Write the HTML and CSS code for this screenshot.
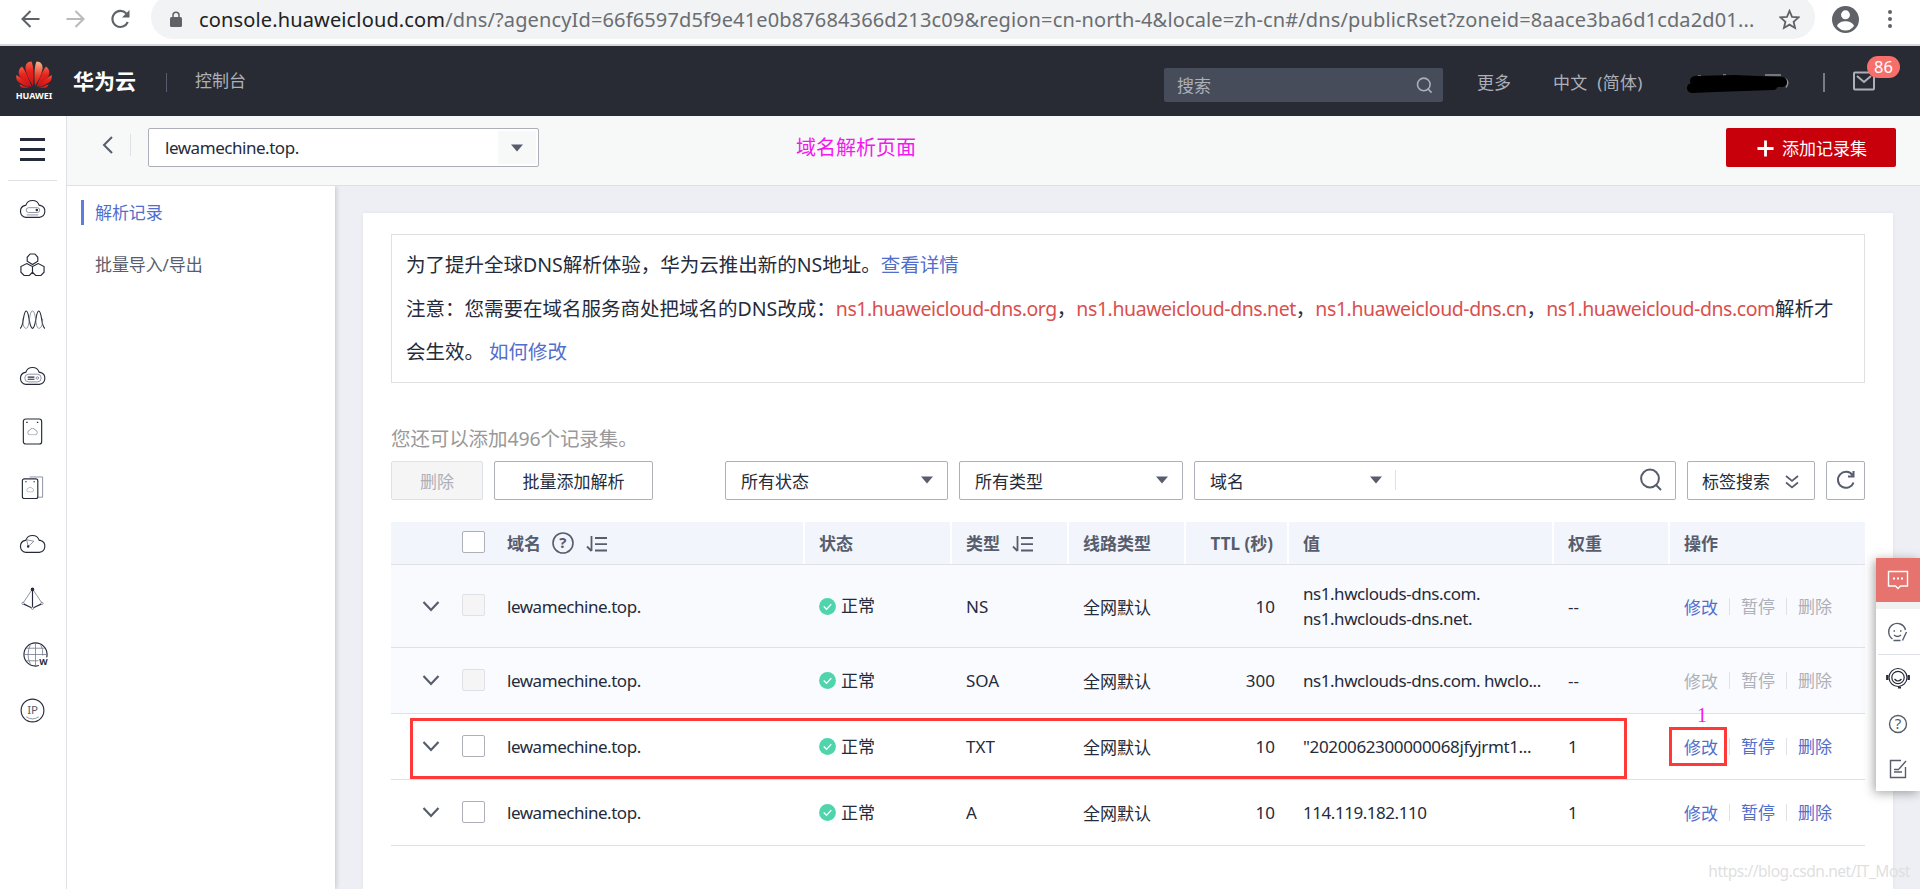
FILE: index.html
```
<!DOCTYPE html>
<html lang="zh-CN">
<head>
    <meta charset="UTF-8">
    <meta name="viewport" content="width=device-width, initial-scale=1.0">
    <title>云解析服务 - 控制台</title>
    <link rel="stylesheet" href="styles.css">
</head>
<body>

    <!-- shared icons -->
    <svg class="defs">
        <symbol id="down" viewBox="0 0 18 12"><path d="M1.5 2 L9 10 L16.5 2" fill="none" stroke="#575d6c" stroke-width="2.2"/></symbol>
        <symbol id="arrow" viewBox="0 0 12 8"><path d="M0 .5H12L6 7.5Z" fill="#575d6c"/></symbol>
        <symbol id="ok" viewBox="0 0 18 18"><circle cx="9" cy="9" r="8.9" fill="#50d4ab"/><path d="M5 9l3 3 5-5.5" fill="none" stroke="#fff" stroke-width="1.4"/></symbol>
        <symbol id="sort" viewBox="0 0 22 18"><path d="M5.5 1V16M1 11.5L5.5 16M9 3H21M9 9.2H21M9 15.5H21" fill="none" stroke="#575d6c" stroke-width="1.8"/></symbol>
        <symbol id="cloud" viewBox="0 0 28 20"><path d="M7 19H21A6.3 6.3 0 0 0 22 6.6H21A7.4 7.4 0 0 0 7 6.6H6.5A6.3 6.3 0 0 0 7 19Z"/></symbol>
        <symbol id="search" viewBox="0 0 24 24"><circle cx="11" cy="10.5" r="8.9"/><path d="M17 17l5 5"/></symbol>
    </svg>

    <div class="browser">
        <svg class="nav-icon" viewBox="0 0 20 20"><path d="M19 10H2M10 2L2 10l8 8" stroke="#5f6368"/></svg>
        <svg class="nav-icon forward" viewBox="0 0 20 20"><path d="M1 10H18M10 2l8 8-8 8" stroke="#bababa"/></svg>
        <svg class="nav-icon reload" viewBox="0 0 20 20"><path d="M17.3 13A8 8 0 1 1 15.8 4.5" stroke="#5f6368"/><path d="M19 1V8.5H11.5Z" fill="#5f6368"/></svg>
        <div class="omnibox">
            <svg class="lock" viewBox="0 0 12 16"><path d="M3 7V4.2a3 3 0 0 1 6 0V7" fill="none" stroke="#5f6368" stroke-width="1.5"/><rect y="6" width="12" height="10" rx="1.5" fill="#5f6368"/></svg>
            <div class="url"><b>console.huaweicloud.com</b>/dns/?agencyId=66f6597d5f9e41e0b87684366d213c09&amp;region=cn-north-4&amp;locale=zh-cn#/dns/publicRset?zoneid=8aace3ba6d1cda2d01...</div>
            <svg class="star" viewBox="0 0 20 20"><path d="M10 1.8l2.4 5.7 6.2.5-4.7 4.1 1.4 6L10 14.9l-5.3 3.2 1.4-6L1.4 8l6.2-.5Z"/></svg>
        </div>
        <svg class="user" viewBox="0 0 26 26"><circle cx="13" cy="13" r="13" fill="#5f6368"/><circle cx="13" cy="8.5" r="4.3" fill="#fff"/><path d="M4.8 19.3C6 16 10 14.8 13 14.8s7 1.2 8.2 4.5A10 10 0 0 1 4.8 19.3Z" fill="#fff"/></svg>
        <svg class="dots" viewBox="0 0 6 20"><circle cx="3" cy="3" r="2"/><circle cx="3" cy="10" r="2"/><circle cx="3" cy="17" r="2"/></svg>
    </div>

    <div class="topbar">
        <div class="logo">
            <svg viewBox="0 0 36 27">
                <defs>
                    <linearGradient id="petal" x1="0" y1="0" x2="0" y2="1"><stop offset="0" stop-color="#f4634e"/><stop offset=".4" stop-color="#e8231c"/><stop offset="1" stop-color="#c81418"/></linearGradient>
                    <linearGradient id="shine" x1="0" y1="0" x2="0" y2="1"><stop offset="0" stop-color="#fbb48c"/><stop offset=".6" stop-color="#ee3a28"/><stop offset="1" stop-color="#d81a18"/></linearGradient>
                </defs>
                <g fill="url(#petal)">
                    <path d="M17 25C17.7 17 18 6 15.5 .5C11 .5 9 4 9.5 8C10.500 14 14 20 17 25Z"/>
                    <path d="M19 25C18.300 17 18 6 20.500 .5C25 .5 27 4 26.500 8C25.500 14 22 20 19 25Z" fill="url(#shine)"/>
                    <path d="M15.500 26C13 18 9 9 6 5.500C2.500 8 2 11.500 3.500 15C6 20 11 24 15.500 26Z"/>
                    <path d="M20.500 26C23 18 27 9 30 5.500C33.500 8 34 11.500 32.500 15C30 20 25 24 20.500 26Z"/>
                    <path d="M14 26.500C9 21 4 16 .5 14C-.3 18 1 20.500 4 22C7 24 11 25.500 14 26.500Z"/>
                    <path d="M22 26.500C27 21 32 16 35.500 14C36.300 18 35 20.500 32 22C29 24 25 25.500 22 26.500Z"/>
                    <path d="M13 27H6.500C5 26.500 4 25 3.500 23.500Z"/>
                    <path d="M23 27H29.500C31 26.500 32 25 32.500 23.500Z"/>
                </g>
            </svg>
            <span>HUAWEI</span>
        </div>
        <div class="brand">华为云</div>
        <i class="bar"></i>
        <div class="console">控制台</div>
        <div class="top-search">搜索<svg><use href="#search"/></svg></div>
        <div class="more">更多</div>
        <div class="lang">中文 (简体)</div>
        <svg class="account" viewBox="0 0 106 20"><path d="M13 2h3M38 1h3M80 1h16M100 4.5q5 3 1 9" fill="none" stroke="#8d9098" stroke-width="1.5"/><path d="M10 7L50 6 97 8M7 14L30 13 88 11" fill="none" stroke="#000" stroke-width="10" stroke-linecap="round"/></svg>
        <i class="bar light"></i>
        <div class="mail">
            <svg viewBox="0 0 22 20"><rect x="1" y="1.5" width="20" height="17" rx="1"/><path d="M4 5l7 6 7-6"/></svg>
            <span class="badge">86</span>
        </div>
    </div>

    <div class="layout">
        <div class="rail">
            <div class="burger"><i></i><i></i><i></i></div>
            <div class="rail-item"><svg viewBox="0 0 28 20"><use href="#cloud"/><rect x="7.5" y="9" width="14" height="5" rx="2.5" class="thin"/><circle cx="18.5" cy="11.5" r=".7"/><path d="M8 16.5H20" class="thin"/></svg></div>
            <div class="rail-item"><svg viewBox="0 0 28 24"><path d="M11.500 1h5l3 3.500v4l-5.500 3.500-5.500-3.500v-4ZM8 11l6 3v6l-3.500 3.500H5.500L2 20v-6ZM20 11l-6 3v6l3.500 3.500h5L26 20v-6Z"/></svg></div>
            <div class="rail-item"><svg viewBox="0 0 28 20"><path d="M1 19C5 19 4 1 7.5 1S10 19 14 19 17 1 20.5 1 23 19 27 19"/><path d="M4 9C4 16 5 19 7.5 19 11.5 19 10 1 14 1S16.5 19 20.5 19C23 19 24.5 16 24.5 9" class="thin"/></svg></div>
            <div class="rail-item"><svg viewBox="0 0 28 20"><use href="#cloud"/><rect x="6" y="8.5" width="17" height="8" rx="4" class="thin"/><path d="M9 11.5h7M9 13.7h7"/><circle cx="19" cy="12.5" r="1.3" class="thin"/></svg></div>
            <div class="rail-item"><svg viewBox="0 0 28 28"><rect x="4.500" y="1" width="19" height="26" rx="2.5"/><path d="M7.5 4.5h1.5M18.5 4.5h1.5"/><use href="#cloud" x="8.5" y="10" width="11" height="8" class="fine"/></svg></div>
            <div class="rail-item"><svg viewBox="0 0 28 24"><path d="M11 1H24.5V22H19" class="thin"/><rect x="3.500" y="3" width="16" height="20.5" rx="2"/><path d="M6.5 6H8M15 6h1.5"/><use href="#cloud" x="7.5" y="11" width="8" height="6" class="fine"/></svg></div>
            <div class="rail-item"><svg viewBox="0 0 28 20"><use href="#cloud"/><path d="M8 6l7.5 1.5L9.5 13Z" class="thin"/><circle cx="9.5" cy="13" r=".7"/></svg></div>
            <div class="rail-item"><svg viewBox="0 0 28 24"><path d="M14 2L4 17M14 2L24 17" class="thin"/><path d="M14 2V22M4.5 17.5L14 22l9.5-4.5"/><circle cx="14" cy="2.5" r="1.3" fill="#252b3a"/><circle cx="4.2" cy="17" r="1.2" fill="#fff" class="thin"/><circle cx="23.8" cy="17" r="1.2" fill="#fff" class="thin"/><circle cx="14" cy="22" r="1.2" fill="#fff" class="thin"/></svg></div>
            <div class="rail-item web"><svg viewBox="0 0 28 28"><circle cx="14" cy="14" r="12"/><path class="thin" d="M14 2V26M2 14H26M4.5 7.5H23.5M4.5 20.5H17M9 3Q3.5 14 9 25M19 3Q22 8 21.5 15"/><rect x="17.5" y="17" width="10" height="9" fill="#fff" stroke="none"/><text x="18" y="24.5">W</text></svg></div>
            <div class="rail-item"><svg viewBox="0 0 28 28"><circle cx="14" cy="14" r="11.8"/><path d="M7.500 20.500Q14 25 20.500 20.500" class="thin"/><text x="8.500" y="18" class="ip">IP</text></svg></div>
        </div>

        <div class="page">
            <div class="subbar">
                <svg class="back" viewBox="0 0 11 18"><path d="M10 1L2 9l8 8"/></svg>
                <i class="back-line"></i>
                <div class="zone latin">lewamechine.top.<span><svg><use href="#arrow"/></svg></span></div>
                <div class="note">域名解析页面</div>
                <div class="add"><svg viewBox="0 0 18 18"><path d="M9 .5V17.5M.5 9H17.5"/></svg>添加记录集</div>
            </div>

            <div class="content">
                <div class="menu">
                    <div class="menu-item active">解析记录</div>
                    <div class="menu-item">批量导入/导出</div>
                </div>

                <div class="card">
                    <div class="tips">
                        <p>为了提升全球DNS解析体验，华为云推出新的NS地址。<a>查看详情</a></p>
                        <p>注意：您需要在域名服务商处把域名的DNS改成：<em>ns1.huaweicloud-dns.org</em>，<em>ns1.huaweicloud-dns.net</em>，<em>ns1.huaweicloud-dns.cn</em>，<em>ns1.huaweicloud-dns.com</em>解析才</p>
                        <p>会生效。 <a>如何修改</a></p>
                    </div>

                    <div class="quota">您还可以添加496个记录集。</div>

                    <div class="tools">
                        <div class="btn disabled">删除</div>
                        <div class="btn batch">批量添加解析</div>
                        <div class="select state">所有状态<svg><use href="#arrow"/></svg></div>
                        <div class="select type">所有类型<svg><use href="#arrow"/></svg></div>
                        <div class="finder">
                            <div class="field">域名<svg><use href="#arrow"/></svg></div>
                            <svg class="mag"><use href="#search"/></svg>
                        </div>
                        <div class="btn tag">标签搜索<svg viewBox="0 0 16 14"><path d="M2 1l6 5 6-5M2 7.5l6 5 6-5"/></svg></div>
                        <div class="btn refresh"><svg viewBox="0 0 20 20"><path d="M17.5 12.5A8 8 0 1 1 16.5 5.2M17.5 1v5.5H12"/></svg></div>
                    </div>

                    <div class="table">
                        <div class="row head">
                            <div></div>
                            <div class="check"><i class="box"></i></div>
                            <div class="line">域名<svg class="help" viewBox="0 0 22 22"><circle cx="11" cy="11" r="10"/><text x="7.3" y="16.2">?</text></svg><svg class="sort"><use href="#sort"/></svg></div>
                            <div class="line">状态</div>
                            <div class="line">类型<svg class="sort"><use href="#sort"/></svg></div>
                            <div class="line">线路类型</div>
                            <div class="line ttl">TTL (秒)</div>
                            <div class="line">值</div>
                            <div class="line">权重</div>
                            <div>操作</div>
                        </div>
                        <div class="row tall">
                            <div class="fold"><svg><use href="#down"/></svg></div>
                            <div class="check"><i class="box off"></i></div>
                            <div class="latin">lewamechine.top.</div>
                            <div class="status"><svg><use href="#ok"/></svg>正常</div>
                            <div>NS</div>
                            <div>全网默认</div>
                            <div class="ttl">10</div>
                            <div class="latin value">ns1.hwclouds-dns.com.<br>ns1.hwclouds-dns.net.</div>
                            <div>--</div>
                            <div class="ops"><a>修改</a><a class="off">暂停</a><a class="off">删除</a></div>
                        </div>
                        <div class="row soa">
                            <div class="fold"><svg><use href="#down"/></svg></div>
                            <div class="check"><i class="box off"></i></div>
                            <div class="latin">lewamechine.top.</div>
                            <div class="status"><svg><use href="#ok"/></svg>正常</div>
                            <div>SOA</div>
                            <div>全网默认</div>
                            <div class="ttl">300</div>
                            <div class="latin">ns1.hwclouds-dns.com. hwclo...</div>
                            <div>--</div>
                            <div class="ops"><a class="off">修改</a><a class="off">暂停</a><a class="off">删除</a></div>
                        </div>
                        <div class="row">
                            <div class="fold"><svg><use href="#down"/></svg></div>
                            <div class="check"><i class="box"></i></div>
                            <div class="latin">lewamechine.top.</div>
                            <div class="status"><svg><use href="#ok"/></svg>正常</div>
                            <div>TXT</div>
                            <div>全网默认</div>
                            <div class="ttl">10</div>
                            <div class="latin digits">"2020062300000068jfyjrmt1...</div>
                            <div>1</div>
                            <div class="ops"><a>修改</a><a>暂停</a><a>删除</a></div>
                            <span class="mark mark-row"></span>
                            <span class="mark mark-edit"></span>
                            <span class="step">1</span>
                        </div>
                        <div class="row">
                            <div class="fold"><svg><use href="#down"/></svg></div>
                            <div class="check"><i class="box"></i></div>
                            <div class="latin">lewamechine.top.</div>
                            <div class="status"><svg><use href="#ok"/></svg>正常</div>
                            <div>A</div>
                            <div>全网默认</div>
                            <div class="ttl">10</div>
                            <div class="latin">114.119.182.110</div>
                            <div>1</div>
                            <div class="ops"><a>修改</a><a>暂停</a><a>删除</a></div>
                        </div>
                    </div>
                </div>
            </div>
        </div>
    </div>

    <div class="float">
        <div class="float-chat"><svg viewBox="0 0 22 20"><path d="M1.5 1.5H20.5V16H13.5L11 18.5 8.5 16H1.5Z"/><path d="M6 8.5h2M10 8.5h2M14 8.5h2" stroke-width="2"/></svg></div>
        <div class="float-item smile"><svg viewBox="0 0 20 20"><path d="M4.500 17A8.500 8.500 0 1 1 17.500 8M18.500 10L14.5 18.500M5.500 18.500h7"/><path d="M6 13q3.500 3 7 0M5.500 9H7M12 9h1.5"/></svg></div>
        <div class="float-item agent"><svg viewBox="0 0 24 22"><circle cx="12" cy="10.5" r="9"/><circle cx="12" cy="10.5" r="6.2"/><path d="M8.5 12Q12 16 15.5 12"/><path d="M1.3 8v5M22.7 8v5" stroke-width="2.4"/><path d="M12 20.5h3" stroke-width="2"/></svg></div>
        <div class="float-item"><svg viewBox="0 0 20 20"><circle cx="10" cy="10" r="8.5"/><text x="6.7" y="15">?</text></svg></div>
        <div class="float-item last"><svg viewBox="0 0 20 20"><path d="M13 1.5H2.5V18.5H17.5V8M18 2L11 10M6 10.500h5M6 13h8"/></svg></div>
    </div>

    <div class="watermark">https://blog.csdn.net/IT_Most</div>

</body>
</html>
```
FILE: styles.css
```
* {
    box-sizing: border-box;
}

body {
    margin: 0;
    height: 889px;
    overflow: hidden;
    position: relative;
    font-family: "Noto Sans", "Noto Sans CJK SC", sans-serif;
    font-size: 17px;
    color: #252b3a;
    background: #fff;
}

svg {
    display: block;
    flex: none;
}

.defs {
    position: absolute;
    width: 0;
    height: 0;
}

/* Browser bar */
.browser {
    display: flex;
    align-items: center;
    height: 46px;
    padding: 0 0 6px 20px;
    border-bottom: 2px solid #d5d7da;
}

.nav-icon {
    width: 21px;
    height: 20px;
    fill: none;
    stroke-width: 2.1;
}

.forward {
    margin-left: 24px;
}

.reload {
    margin-left: 24px;
}

.omnibox {
    display: flex;
    align-items: center;
    width: 1664px;
    height: 44px;
    margin: -4px 0 0 20px;
    padding: 4px 15px 0 19px;
    border-radius: 22px;
    background: #f1f3f4;
}

.lock {
    width: 12px;
    height: 16px;
}

.url {
    flex: 1;
    margin-left: 17px;
    font-size: 20px;
    letter-spacing: .14px;
    white-space: nowrap;
    color: #6a6d71;
}

.url b {
    font-weight: normal;
    color: #202124;
}

.star {
    width: 21px;
    height: 21px;
    fill: none;
    stroke: #5f6368;
    stroke-width: 1.7;
}

.user {
    width: 27px;
    height: 27px;
    margin-left: 17px;
}

.dots {
    width: 6px;
    height: 20px;
    margin-left: 28px;
    fill: #5f6368;
}

/* Console header */
.topbar {
    display: flex;
    align-items: center;
    height: 70px;
    padding-left: 16px;
    background: #282b33;
    color: #adb0b8;
}

.logo {
    width: 36px;
    margin-top: -2px;
    text-align: center;
}

.logo svg {
    width: 36px;
    height: 27px;
}

.logo span {
    display: block;
    margin: 3px -4px 0;
    font: bold 9px/9px "Noto Sans", sans-serif;
    color: #fff;
}

.brand {
    width: 93px;
    margin: -3px 0 0 21px;
    font-size: 21px;
    font-weight: bold;
    color: #fff;
}

.bar {
    width: 1px;
    height: 19px;
    margin-top: 2px;
    background: #575d6c;
}

.bar.light {
    width: 2px;
    margin-left: 32px;
    background: #777b85;
}

.console {
    width: 969px;
    margin: -3px 0 0 28px;
}

.top-search {
    display: flex;
    align-items: center;
    justify-content: space-between;
    width: 279px;
    height: 34px;
    margin-top: 8px;
    padding: 0 10px 2px 13px;
    border-radius: 2px;
    background: #464c59;
}

.top-search svg {
    width: 17px;
    height: 17px;
    margin-top: 2px;
    fill: none;
    stroke: #adb0b8;
    stroke-width: 2.2;
}

.more {
    width: 76px;
    margin: 1px 0 0 34px;
}

.lang {
    width: 132px;
    margin-top: 1px;
    letter-spacing: .3px;
    word-spacing: 5px;
    white-space: nowrap;
}

.account {
    width: 106px;
    height: 20px;
    margin-top: 6px;
}

.mail {
    position: relative;
    margin-left: 28px;
}

.mail svg {
    width: 22px;
    height: 20px;
    fill: none;
    stroke: #adb0b8;
    stroke-width: 2;
}

.badge {
    position: absolute;
    left: 14px;
    top: -15px;
    width: 33px;
    height: 22px;
    border-radius: 11px;
    background: #f66f6a;
    color: #fff;
    font-size: 16.5px;
    line-height: 22px;
    text-align: center;
}

/* Layout */
.layout {
    display: flex;
    height: 773px;
}

.rail {
    position: relative;
    z-index: 1;
    width: 67px;
    border-right: 1px solid #dfe1e6;
    background: #fff;
}

.burger {
    display: flex;
    flex-direction: column;
    gap: 7px;
    width: 49px;
    height: 65px;
    margin: 0 0 0 8px;
    padding: 22px 12px 0;
    border-bottom: 1px solid #dfe1e6;
}

.burger i {
    height: 3px;
    background: #252b3a;
}

.rail-item {
    display: flex;
    align-items: center;
    justify-content: center;
    width: 65px;
    height: 55.8px;
}

.rail-item svg {
    width: 27px;
    margin-bottom: 1px;
    fill: none;
    stroke: #252b3a;
    stroke-width: 1.2;
}

.rail-item .thin,
.rail-item .fine {
    stroke: #70758a;
    stroke-width: .8;
}

.rail-item .fine {
    stroke-width: 1.8;
}

.rail-item text {
    font-size: 9px;
    font-weight: bold;
    fill: #252b3a;
    stroke: none;
}

.rail-item .ip {
    font-size: 12px;
    font-weight: normal;
    fill: #575d6c;
}

.web {
    padding-left: 5px;
}

.page {
    flex: 1;
    display: flex;
    flex-direction: column;
}

/* Zone bar */
.subbar {
    display: flex;
    position: relative;
    height: 70px;
    padding: 12px 24px 0 36px;
    border-bottom: 1px solid #dfe1e1;
    background: #f7f9f8;
}

.back {
    width: 11px;
    height: 18px;
    margin: 8px 1px 0 -1px;
    fill: none;
    stroke: #575d6c;
    stroke-width: 2;
}

.back-line {
    width: 1px;
    height: 22px;
    margin: 6px 17px 0 16px;
    background: #dfe1e6;
}

.latin {
    letter-spacing: -.46px;
}

.digits {
    letter-spacing: -.36px;
}

.zone {
    display: flex;
    justify-content: space-between;
    width: 391px;
    height: 39px;
    padding: 2px 2px 2px 16px;
    border: 1px solid #adb0b8;
    border-radius: 2px;
    background: #fff;
    line-height: 34px;
}

.zone span {
    display: flex;
    align-items: center;
    justify-content: center;
    width: 38px;
    background: #f7f9f8;
}

.zone svg,
.select svg,
.field svg {
    width: 12px;
    height: 8px;
}

.note {
    margin: 5px 0 0 257px;
    font-size: 20px;
    line-height: 30px;
    color: #f218ee;
}

.add {
    display: flex;
    align-items: center;
    justify-content: center;
    gap: 8px;
    width: 170px;
    height: 39px;
    margin-left: auto;
    padding: 0 0 1px 2px;
    border-radius: 2px;
    background: #c7000b;
    color: #fff;
}

.add svg {
    width: 17px;
    height: 17px;
    margin-top: 2px;
    stroke: #fff;
    stroke-width: 3;
}

.content {
    flex: 1;
    display: flex;
    overflow: hidden;
    background: #eeeff4;
}

/* Side menu */
.menu {
    width: 268px;
    padding: 14px 0 0 14px;
    background: #fff;
    box-shadow: 1px 0 5px rgba(0, 0, 0, .18);
}

.menu-item {
    height: 25px;
    margin-bottom: 27px;
    padding-left: 11px;
    border-left: 3px solid transparent;
    line-height: 25px;
    letter-spacing: -.1px;
    color: #575d6c;
}

.menu-item.active {
    border-color: #5e7ce0;
    color: #526ecc;
}

/* Record card */
.card {
    width: 1530px;
    margin: 27px 0 0 28px;
    padding: 21px 28px 0;
    background: #fff;
    box-shadow: 0 0 4px rgba(0, 0, 0, .06);
}

a {
    color: #526ecc;
}

.tips {
    height: 149px;
    padding: 8px 14px;
    border: 1px solid #dfe1e1;
    font-size: 19.5px;
}

.tips p {
    margin: 0;
    line-height: 43.7px;
    white-space: nowrap;
}

.tips em {
    font-style: normal;
    letter-spacing: -.43px;
    color: #d94f4f;
}

.quota {
    margin-top: 41px;
    font-size: 19.5px;
    line-height: 30px;
    letter-spacing: -.1px;
    color: #999;
}

.tools {
    display: flex;
    margin-top: 7px;
}

.btn,
.select,
.finder {
    display: flex;
    align-items: center;
    justify-content: center;
    height: 39px;
    padding-bottom: 1px;
    border: 1px solid #adb0b8;
    border-radius: 2px;
    background: #fff;
}

.disabled {
    width: 92px;
    border-color: #dfe1e6;
    background: #f5f5f6;
    color: #adb0b8;
}

.batch {
    width: 159px;
    margin: 0 72px 0 11px;
}

.select {
    justify-content: space-between;
    width: 223px;
    margin-right: 11px;
    padding: 0 14px 1px 15px;
}

.select.type {
    width: 224px;
}

.finder {
    justify-content: space-between;
    width: 482px;
    padding: 0 12px 1px 15px;
}

.field {
    display: flex;
    align-items: center;
    justify-content: space-between;
    width: 186px;
    height: 20px;
    padding-right: 13px;
    border-right: 1px solid #dfe1e6;
}

.mag {
    width: 24px;
    height: 24px;
    fill: none;
    stroke: #575d6c;
    stroke-width: 2;
}

.tag {
    gap: 14px;
    width: 128px;
    margin: 0 11px;
}

.tag svg {
    width: 16px;
    height: 14px;
    margin-top: 3px;
    fill: none;
    stroke: #575d6c;
    stroke-width: 1.7;
}

.refresh {
    width: 39px;
}

.refresh svg {
    width: 20px;
    height: 20px;
    fill: none;
    stroke: #575d6c;
    stroke-width: 2;
}

/* Record table */
.table {
    margin-top: 22px;
}

.row {
    display: grid;
    grid-template-columns: 57px 45px 312px 147px 117px 117px 103px 265px 116px 195px;
    position: relative;
    height: 66px;
    border-bottom: 1px solid #dfe1e6;
}

.row > div {
    display: flex;
    align-items: center;
    padding: 0 14px;
    white-space: nowrap;
}

.row.head {
    height: 43px;
    background: #f2f5fc;
    color: #575d6c;
    font-weight: bold;
}

.head > div {
    padding-bottom: 2px;
}

.head .line {
    border-right: 2px solid #fff;
}

.row.tall {
    height: 83px;
    background: #f9fafe;
}

.row.soa {
    background: #fafbff;
}

.row > .fold {
    padding-left: 31px;
}

.row > .check {
    padding-right: 0;
}

.fold svg {
    width: 18px;
    height: 12px;
    margin-bottom: 1px;
}

.box {
    flex: none;
    width: 23px;
    height: 22px;
    margin-bottom: 2px;
    border: 1px solid #adb0b8;
    border-radius: 2px;
    background: #fff;
}

.head .box {
    margin-bottom: 0;
}

.box.off {
    border-color: #dfe1e6;
    background: #f5f5f6;
}

.help {
    width: 22px;
    height: 22px;
    margin: 2px 0 0 11px;
    fill: none;
    stroke: #575d6c;
    stroke-width: 1.6;
}

.help text,
.float text {
    font-size: 15px;
    fill: #575d6c;
    stroke: none;
}

.sort {
    width: 22px;
    height: 18px;
    margin: 3px 0 0 12px;
}

.row > .status {
    gap: 5px;
    padding-bottom: 3px;
}

.status svg {
    width: 17px;
    height: 17px;
    margin-top: 3px;
}

.row > .ttl {
    justify-content: flex-end;
}

.value {
    line-height: 25px;
}

.ops a + a {
    margin-left: 11px;
    padding-left: 11px;
    border-left: 1px solid #dfe1e6;
    line-height: 17px;
}

.ops .off {
    color: #adb0b8;
}

/* Tutorial marks over the table */
.mark {
    position: absolute;
    border: 3px solid #ff3838;
}

.mark-row {
    left: 19px;
    top: 4px;
    width: 1217px;
    height: 61px;
}

.mark-edit {
    left: 1278px;
    top: 13px;
    width: 58px;
    height: 39px;
}

.step {
    position: absolute;
    left: 1306px;
    top: -11px;
    font: 20px/24px "Liberation Serif", serif;
    color: #f218ee;
}

/* Floating service bar */
.float {
    position: absolute;
    right: 0;
    top: 558px;
    width: 44px;
    background: #fff;
    box-shadow: -2px 2px 10px rgba(0, 0, 0, .35);
}

.float svg {
    width: 22px;
    height: 20px;
    fill: none;
    stroke: #575d6c;
    stroke-width: 1.4;
}

.float-chat {
    display: flex;
    align-items: center;
    justify-content: center;
    height: 44px;
    margin-bottom: 7px;
    background: #e6736e;
    box-shadow: 0 0 0 7px #f1f1f2;
    clip-path: inset(0 0 -7px 0);
}

.float .float-chat svg {
    stroke: #fff;
}

.float-item {
    display: flex;
    align-items: center;
    justify-content: center;
    height: 46px;
}

.float .smile {
    margin-left: 2px;
    padding-right: 2px;
    border-bottom: 1px solid #dfe1e6;
}

.float .agent svg {
    width: 24px;
    height: 22px;
    stroke: #252b3a;
    stroke-width: 1.2;
}

.float-item.last {
    height: 44px;
}

.watermark {
    position: absolute;
    right: 10px;
    bottom: 6px;
    font-size: 15.5px;
    line-height: 24px;
    letter-spacing: -.46px;
    color: #dfdfe1;
}
```
